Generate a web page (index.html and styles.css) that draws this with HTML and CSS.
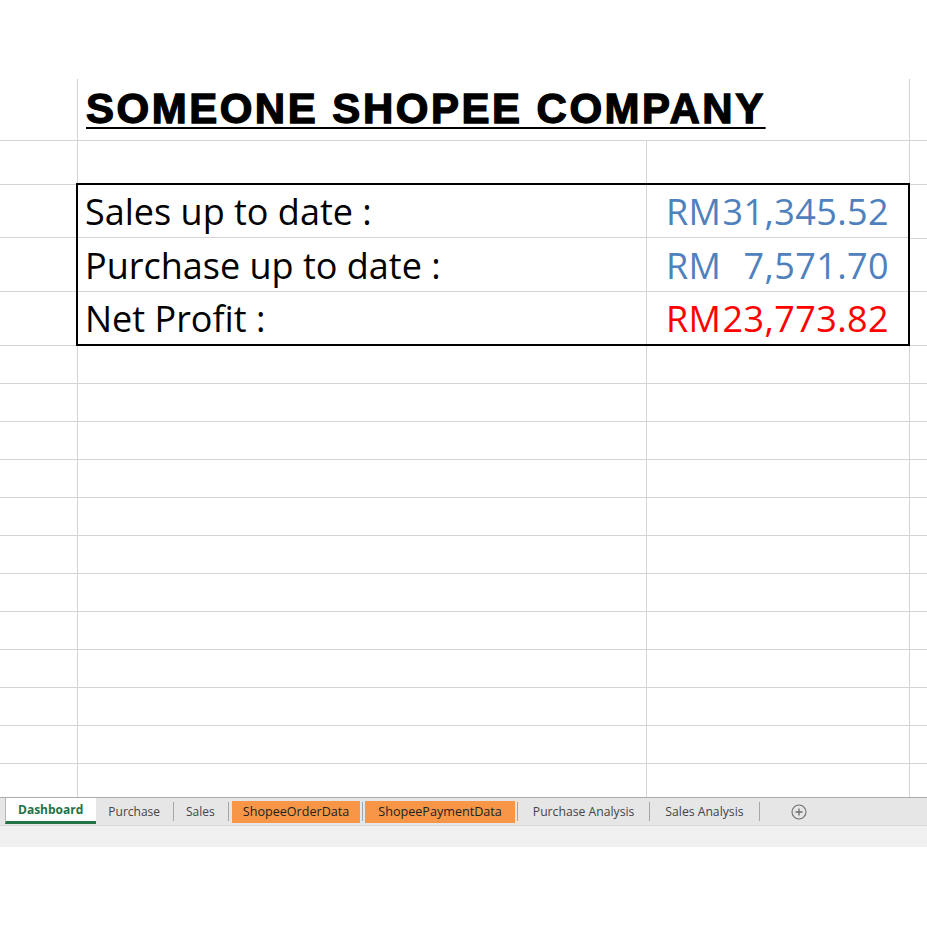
FILE: index.html
```html
<!DOCTYPE html>
<html>
<head>
<meta charset="utf-8">
<link rel="stylesheet" href="styles.css">
</head>
<body>
<div class="top-space"></div>
<div class="sheet">
  <div class="row r-title">
    <div class="cell a"></div>
    <div class="cell bc"><span class="title">SOMEONE SHOPEE COMPANY</span></div>
    <div class="cell d"></div>
  </div>
  <div class="row r-gap">
    <div class="cell a"></div><div class="cell b"></div><div class="cell c"></div><div class="cell d"></div>
  </div>
  <div class="block">
    <div class="side side-a">
      <div class="cell a h53"></div>
      <div class="cell a h54"></div>
      <div class="cell a h54"></div>
    </div>
    <div class="box">
      <div class="brow h53">
        <div class="lbl">Sales up to date :</div>
        <div class="val blue"><span>RM</span><span>31,345.52</span></div>
      </div>
      <div class="brow h54">
        <div class="lbl">Purchase up to date :</div>
        <div class="val blue"><span>RM</span><span>7,571.70</span></div>
      </div>
      <div class="brow last">
        <div class="lbl">Net Profit :</div>
        <div class="val red"><span>RM</span><span>23,773.82</span></div>
      </div>
    </div>
    <div class="side side-d">
      <div class="cell d h53"></div>
      <div class="cell d h54"></div>
      <div class="cell d h54"></div>
    </div>
  </div>
  <div class="row"><div class="cell a"></div><div class="cell b"></div><div class="cell c"></div><div class="cell d"></div></div>
  <div class="row"><div class="cell a"></div><div class="cell b"></div><div class="cell c"></div><div class="cell d"></div></div>
  <div class="row"><div class="cell a"></div><div class="cell b"></div><div class="cell c"></div><div class="cell d"></div></div>
  <div class="row"><div class="cell a"></div><div class="cell b"></div><div class="cell c"></div><div class="cell d"></div></div>
  <div class="row"><div class="cell a"></div><div class="cell b"></div><div class="cell c"></div><div class="cell d"></div></div>
  <div class="row"><div class="cell a"></div><div class="cell b"></div><div class="cell c"></div><div class="cell d"></div></div>
  <div class="row"><div class="cell a"></div><div class="cell b"></div><div class="cell c"></div><div class="cell d"></div></div>
  <div class="row"><div class="cell a"></div><div class="cell b"></div><div class="cell c"></div><div class="cell d"></div></div>
  <div class="row"><div class="cell a"></div><div class="cell b"></div><div class="cell c"></div><div class="cell d"></div></div>
  <div class="row"><div class="cell a"></div><div class="cell b"></div><div class="cell c"></div><div class="cell d"></div></div>
  <div class="row"><div class="cell a"></div><div class="cell b"></div><div class="cell c"></div><div class="cell d"></div></div>
  <div class="row"><div class="cell a"></div><div class="cell b"></div><div class="cell c"></div><div class="cell d"></div></div>
</div>
<div class="tabbar">
  <div class="tab active">Dashboard</div>
  <div class="tab">Purchase</div>
  <div class="sep"></div>
  <div class="tab">Sales</div>
  <div class="sep"></div>
  <div class="tab orange">ShopeeOrderData</div>
  <div class="sep"></div>
  <div class="tab orange o2">ShopeePaymentData</div>
  <div class="sep"></div>
  <div class="tab wide">Purchase Analysis</div>
  <div class="sep"></div>
  <div class="tab wide">Sales Analysis</div>
  <div class="sep"></div>
  <svg class="plus" width="16" height="16" viewBox="0 0 16 16">
    <circle cx="8" cy="8" r="7" fill="none" stroke="#6e6e6e" stroke-width="1.1"/>
    <path d="M8 4.5v7M4.5 8h7" stroke="#6e6e6e" stroke-width="1.3" fill="none"/>
  </svg>
</div>
<div class="statusbar"></div>
</body>
</html>
```

FILE: styles.css
```css
* { box-sizing: border-box; }
html, body { margin: 0; padding: 0; background: #fff; }
body { font-family: "Open Sans", "Noto Sans", sans-serif; }

.top-space { height: 79px; }

.sheet {
  height: 718px;
  overflow: hidden;
}

.row { display: flex; height: 38px; }
.r-title { height: 62px; }
.r-gap { height: 44px; }

.cell {
  border-right: 1px solid #d4d4d4;
  border-bottom: 1px solid #d4d4d4;
  height: 100%;
}
.a { width: 78px; flex: none; }
.b { width: 569px; flex: none; }
.c { width: 263px; flex: none; }
.bc { width: 832px; flex: none; padding-left: 8px; }
.d { flex: 1; border-right: none; }

.title {
  display: inline-block;
  font-family: "Liberation Sans", Arial, sans-serif;
  font-weight: 700;
  font-size: 42px;
  line-height: 59px;
  letter-spacing: 2.5px;
  color: #000;
  -webkit-text-stroke: 1.3px #000;
  text-decoration: underline;
  text-decoration-thickness: 2px;
  text-underline-offset: 4px;
}

.block { display: flex; height: 161px; }
.side { display: flex; flex-direction: column; }
.side-a { width: 78px; flex: none; }
.side-d { flex: 1; }
.side .cell { height: auto; width: 100%; }
.h53 { height: 53px !important; }
.h54 { height: 54px !important; }

.box {
  width: 834px;
  height: 163px;
  flex: none;
  margin: -2px 0 0 -2px;
  border: 2px solid #000;
  display: flex;
  flex-direction: column;
}
.brow {
  display: flex;
  border-bottom: 1px solid #d4d4d4;
}
.brow.last { height: 52px; border-bottom: none; }

.lbl, .val {
  font-family: "Open Sans", "Noto Sans", sans-serif;
  font-size: 36px;
  line-height: 36px;
  display: flex;
  align-items: flex-end;
  padding-bottom: 7px;
}
.lbl {
  width: 569px;
  flex: none;
  border-right: 1px solid #d4d4d4;
  padding-left: 7px;
  color: #000;
}
.val {
  flex: 1;
  justify-content: space-between;
  padding-left: 19px;
  padding-right: 19px;
  letter-spacing: 0.4px;
}
.blue { color: #4f81bd; }
.red { color: #ff0000; }

.tabbar {
  height: 28px;
  border-top: 1px solid #ababab;
  background: #e6e6e6;
  display: flex;
  align-items: center;
  padding-left: 5px;
  font-size: 12px;
  color: #444;
}
.tab {
  height: 100%;
  display: flex;
  align-items: center;
  padding: 0 13px 0 12px;
  white-space: nowrap;
}
.tab.active {
  background: #fff;
  border-left: 1px solid #b8b8b8;
  color: #217346;
  font-weight: 700;
  padding: 0 13px 0 12px;
  height: 26px;
  align-self: flex-start;
  border-bottom: 3px solid #217346;
}
.tab.wide { padding: 0 15px; font-size: 12.2px; }
.tab.orange {
  background: #f79646;
  color: #222;
  height: 22px;
  font-size: 12.6px;
  padding: 0 11px;
  margin: 0 2px 0 3px;
}
.tab.orange.o2 { padding: 0 13px; margin: 0 2px; }
.sep {
  width: 1px;
  height: 19px;
  background: #a6a6a6;
  flex: none;
}
.plus { margin-left: 31px; flex: none; }

.statusbar {
  height: 22px;
  background: #f0f0f0;
  border-top: 1px solid #d6d6d6;
}
```
